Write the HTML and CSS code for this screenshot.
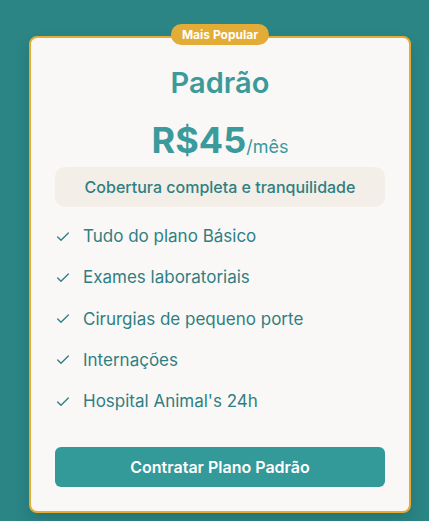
FILE: index.html
```html
<!DOCTYPE html>
<html lang="pt-BR">
<head>
<meta charset="utf-8">
<title>Plano Padrão</title>
<link rel="stylesheet" href="styles.css">
</head>
<body>
<div class="page">
  <div class="card">
    <span class="badge">Mais Popular</span>
    <h2 class="title">Padrão</h2>
    <div class="price"><span class="amount">R$45</span><span class="period">/mês</span></div>
    <div class="tagline">Cobertura completa e tranquilidade</div>
    <ul class="features">
      <li><svg class="check" viewBox="0 0 24 24" width="16" height="16"><path d="M20 6 9 17l-5-5"/></svg><span>Tudo do plano Básico</span></li>
      <li><svg class="check" viewBox="0 0 24 24" width="16" height="16"><path d="M20 6 9 17l-5-5"/></svg><span>Exames laboratoriais</span></li>
      <li><svg class="check" viewBox="0 0 24 24" width="16" height="16"><path d="M20 6 9 17l-5-5"/></svg><span>Cirurgias de pequeno porte</span></li>
      <li><svg class="check" viewBox="0 0 24 24" width="16" height="16"><path d="M20 6 9 17l-5-5"/></svg><span>Internações</span></li>
      <li><svg class="check" viewBox="0 0 24 24" width="16" height="16"><path d="M20 6 9 17l-5-5"/></svg><span>Hospital Animal's 24h</span></li>
    </ul>
    <button class="cta">Contratar Plano Padrão</button>
  </div>
</div>
</body>
</html>
```
FILE: styles.css
```css
* { box-sizing: border-box; }
html, body { margin: 0; padding: 0; }
body {
  background: #2b8585;
  font-family: Inter, "Noto Sans", sans-serif;
  width: 429px;
  height: 521px;
  overflow: hidden;
}
.page {
  padding: 36px 18px 0 29px;
}
.card {
  position: relative;
  width: 382px;
  background: #faf8f6;
  border: 2px solid #e2ac36;
  border-radius: 8px;
  padding: 27px 24px 24px;
  box-shadow: 0 8px 16px rgba(0, 0, 0, 0.12);
  text-align: center;
}
.badge {
  position: absolute;
  top: -14px;
  left: 50%;
  transform: translateX(-50%);
  background: #e2ac36;
  color: #fff;
  font-size: 12px;
  font-weight: 700;
  line-height: 21px;
  height: 21px;
  padding: 0 11px;
  border-radius: 11px;
  white-space: nowrap;
}
.title {
  margin: 0;
  font-size: 29px;
  line-height: 36px;
  font-weight: 600;
  color: #3a9a9c;
}
.price {
  margin-top: 17px;
  line-height: 44px;
  height: 44px;
  color: #3a9a9c;
}
.amount {
  font-size: 36px;
  font-weight: 700;
  line-height: 44px;
}
.period {
  font-size: 18px;
  font-weight: 400;
  line-height: 1;
}
.tagline {
  margin-top: 5px;
  background: #f3eee8;
  border-radius: 10px;
  padding: 10px;
  font-size: 16px;
  line-height: 20px;
  font-weight: 500;
  color: #2f7f82;
}
.features {
  list-style: none;
  margin: 9px 0 0;
  padding: 0;
  text-align: left;
}
.features li {
  display: flex;
  align-items: center;
  gap: 12px;
  padding: 8px 0;
  font-size: 17px;
  line-height: 25.25px;
  color: #2f7f82;
}
.check {
  flex: none;
  fill: none;
  stroke: #2f7f82;
  stroke-width: 2;
  stroke-linecap: round;
  stroke-linejoin: round;
}
.cta {
  display: block;
  width: 100%;
  margin-top: 25px;
  height: 40px;
  border: none;
  border-radius: 6px;
  background: #339999;
  color: #fff;
  font-family: inherit;
  font-size: 16px;
  font-weight: 600;
}
```
